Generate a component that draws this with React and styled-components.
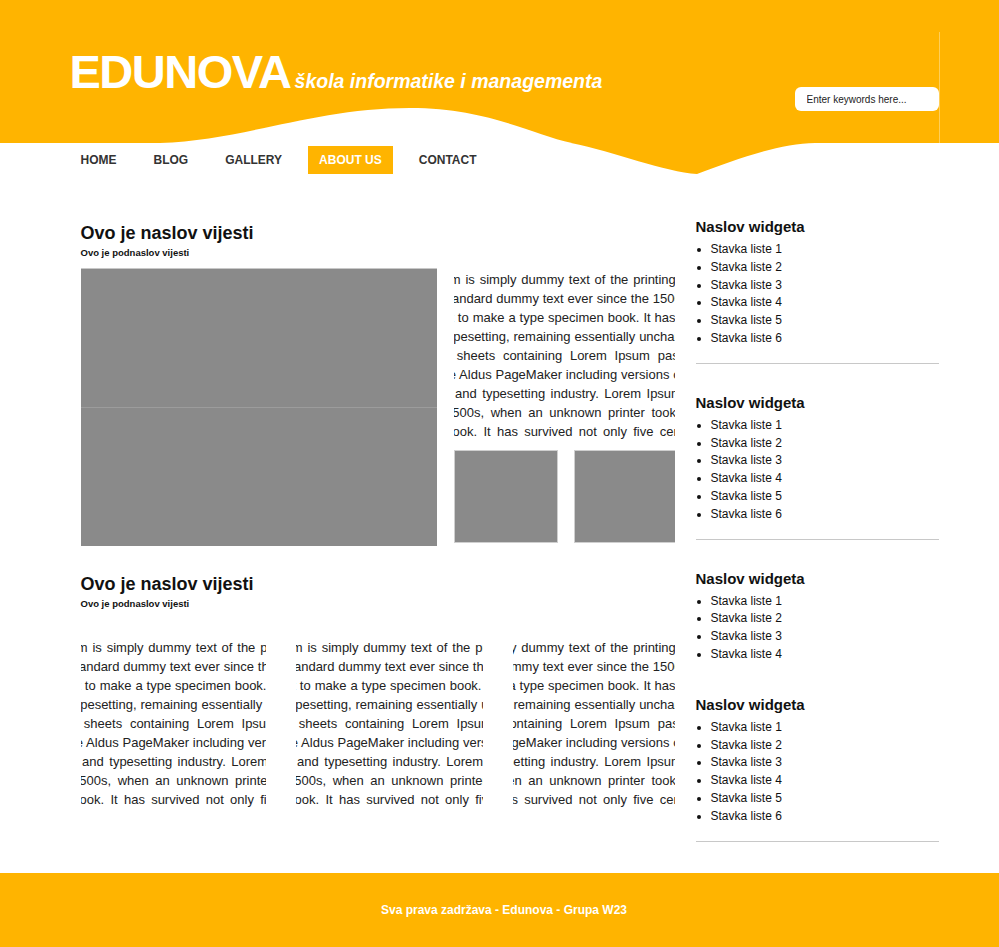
import React from 'react'
import styled, { createGlobalStyle } from 'styled-components'

const YELLOW = '#ffb400'

const LOREM = "Lorem Ipsum is simply dummy text of the printing and typesetting industry. Lorem Ipsum has been the industry's standard dummy text ever since the 1500s, when an unknown printer took a galley of type and scrambled it to make a type specimen book. It has survived not only five centuries, but also the leap into electronic typesetting, remaining essentially unchanged. It was popularised in the 1960s with the release of Letraset sheets containing Lorem Ipsum passages, and more recently with desktop publishing software like Aldus PageMaker including versions of Lorem Ipsum."
const TEXT = LOREM + ' ' + LOREM

const GlobalStyle = createGlobalStyle`
html { background: #000; }
body {
  margin: 0;
  background: #fff;
  font-family: "Liberation Sans", Arial, sans-serif;
  color: #111;
}
`

const Header = styled.header`
position: relative;
height: 143px;
padding-top: 32px;
box-sizing: border-box;
background: ${YELLOW};
`

const HeaderInner = styled.div`
width: 880px;
height: 111px;
margin: 0 auto;
display: flex;
align-items: flex-start;
box-sizing: border-box;
border-right: 1px solid rgba(255, 255, 255, 0.35);
`

const Brand = styled.div`
display: flex;
align-items: baseline;
margin-top: 16px;
padding-left: 10px;
color: #fff;
`

const Logo = styled.span`
font-size: 47px;
line-height: 47px;
font-weight: bold;
letter-spacing: -1.5px;
`

const Tagline = styled.span`
margin-left: 4px;
font-size: 19.5px;
font-weight: bold;
font-style: italic;
`

const Search = styled.input`
margin-left: auto;
margin-top: 55px;
width: 144px;
height: 24px;
box-sizing: border-box;
border: none;
border-radius: 6px;
padding: 0 0 0 12px;
font-family: "Liberation Sans", Arial, sans-serif;
font-size: 10px;
outline: none;
&::placeholder { color: #222; }
`

const Wave = styled.svg`
position: absolute;
left: 0;
top: 100px;
width: 100%;
height: 80px;
`

const NavBar = styled.nav`
width: 880px;
margin: 0 auto;
padding: 3px 0 0 10px;
box-sizing: border-box;
`

const NavList = styled.ul`
display: flex;
gap: 15px;
margin: 0;
padding: 0;
list-style: none;
`

const NavItem = styled.li`
height: 28px;
line-height: 28px;
padding: 0 11px;
font-size: 12px;
font-weight: bold;
color: ${p => (p.$active ? '#fff' : '#333')};
background: ${p => (p.$active ? YELLOW : 'transparent')};
`

const Content = styled.div`
width: 880px;
margin: 0 auto;
padding: 44px 1px 0 21px;
box-sizing: border-box;
display: grid;
grid-template-columns: 595px 243px;
column-gap: 20px;
align-items: start;
`

const Main = styled.main`
padding-top: 4px;
`

const Article = styled.section`
margin-top: ${p => p.$top || 0}px;
`

const Title = styled.h2`
margin: 0;
font-size: 18px;
line-height: 22px;
font-weight: bold;
color: #111;
`

const Subtitle = styled.h4`
margin: 3px 0 0;
font-size: 9.5px;
line-height: 12px;
font-weight: bold;
color: #111;
`

const MediaRow = styled.div`
display: grid;
grid-template-columns: 356px 221px;
column-gap: 17px;
margin-top: 9px;
`

const ImageBlock = styled.div`
height: 139px;
box-sizing: border-box;
background: #8a8a8a;
border-top: 1px solid ${p => p.$edge};
`

const TextCol = styled.div`
display: flex;
flex-direction: column;
padding-top: 2px;
`

const TextWindow = styled.div`
height: 171px;
overflow: hidden;
`

const Para = styled.p`
width: 604px;
margin: 0 0 0 ${p => p.$shift}px;
font-size: 13px;
line-height: 19px;
text-align: justify;
color: #222;
`

const Thumbs = styled.div`
display: flex;
gap: 16px;
margin-top: 9px;
overflow: hidden;
`

const Thumb = styled.div`
flex: 0 0 104px;
height: 93px;
box-sizing: border-box;
background: #8a8a8a;
border: 1px solid #cfcfcf;
`

const Columns = styled.div`
display: grid;
grid-template-columns: 185px 187px 162px;
column-gap: 30px;
margin-top: 28px;
`

const Sidebar = styled.aside``

const Widget = styled.div`
padding-bottom: ${p => (p.$divider ? 15 : 0)}px;
margin-bottom: ${p => p.$space}px;
border-bottom: ${p => (p.$divider ? '1px solid #c8c8c8' : 'none')};
`

const WidgetTitle = styled.h3`
margin: 0 0 5px;
font-size: 15px;
line-height: 18px;
font-weight: bold;
color: #111;
`

const WidgetList = styled.ul`
margin: 0;
padding-left: 15px;
`

const WidgetItem = styled.li`
font-size: 12px;
line-height: 17.8px;
color: #111;
`

const Footer = styled.footer`
height: 74px;
display: flex;
align-items: center;
justify-content: center;
padding-left: 9px;
background: ${YELLOW};
color: #fff;
font-size: 12px;
font-weight: bold;
`

const navLinks = ['HOME', 'BLOG', 'GALLERY', 'ABOUT US', 'CONTACT']

const widgets = [
  { count: 6, divider: true, space: 30 },
  { count: 6, divider: true, space: 30 },
  { count: 4, divider: false, space: 32 },
  { count: 6, divider: true, space: 31 },
]

export default function App() {
  return (
    <>
      <GlobalStyle />
      <Header>
        <HeaderInner>
          <Brand>
            <Logo>EDUNOVA</Logo>
            <Tagline>škola informatike i managementa</Tagline>
          </Brand>
          <Search type="text" placeholder="Enter keywords here..." />
        </HeaderInner>
        <Wave viewBox="0 0 999 80" preserveAspectRatio="none">
          <path d="M160,43 C245,40 315,8 410,8 C488,8 530,34 572,43 Z" fill="#fff" />
          <path d="M571,43 C615,52 665,72 697,74 C735,60 780,43 815,43 Z" fill={YELLOW} />
        </Wave>
      </Header>

      <NavBar>
        <NavList>
          {navLinks.map(l => (
            <NavItem key={l} $active={l === 'ABOUT US'}>{l}</NavItem>
          ))}
        </NavList>
      </NavBar>

      <Content>
        <Main>
          <Article>
            <Title>Ovo je naslov vijesti</Title>
            <Subtitle>Ovo je podnaslov vijesti</Subtitle>
            <MediaRow>
              <div>
                <ImageBlock $edge="#c8c8c8" />
                <ImageBlock $edge="#9c9c9c" />
              </div>
              <TextCol>
                <TextWindow>
                  <Para $shift={-70}>{TEXT}</Para>
                </TextWindow>
                <Thumbs>
                  <Thumb />
                  <Thumb />
                </Thumbs>
              </TextCol>
            </MediaRow>
          </Article>

          <Article $top={27}>
            <Title>Ovo je naslov vijesti</Title>
            <Subtitle>Ovo je podnaslov vijesti</Subtitle>
            <Columns>
              <TextWindow><Para $shift={-70}>{TEXT}</Para></TextWindow>
              <TextWindow><Para $shift={-70}>{TEXT}</Para></TextWindow>
              <TextWindow><Para $shift={-129}>{TEXT}</Para></TextWindow>
            </Columns>
          </Article>
        </Main>

        <Sidebar>
          {widgets.map((w, i) => (
            <Widget key={i} $divider={w.divider} $space={w.space}>
              <WidgetTitle>Naslov widgeta</WidgetTitle>
              <WidgetList>
                {Array.from({ length: w.count }, (_, n) => (
                  <WidgetItem key={n}>Stavka liste {n + 1}</WidgetItem>
                ))}
              </WidgetList>
            </Widget>
          ))}
        </Sidebar>
      </Content>

      <Footer>Sva prava zadržava - Edunova - Grupa W23</Footer>
    </>
  )
}
